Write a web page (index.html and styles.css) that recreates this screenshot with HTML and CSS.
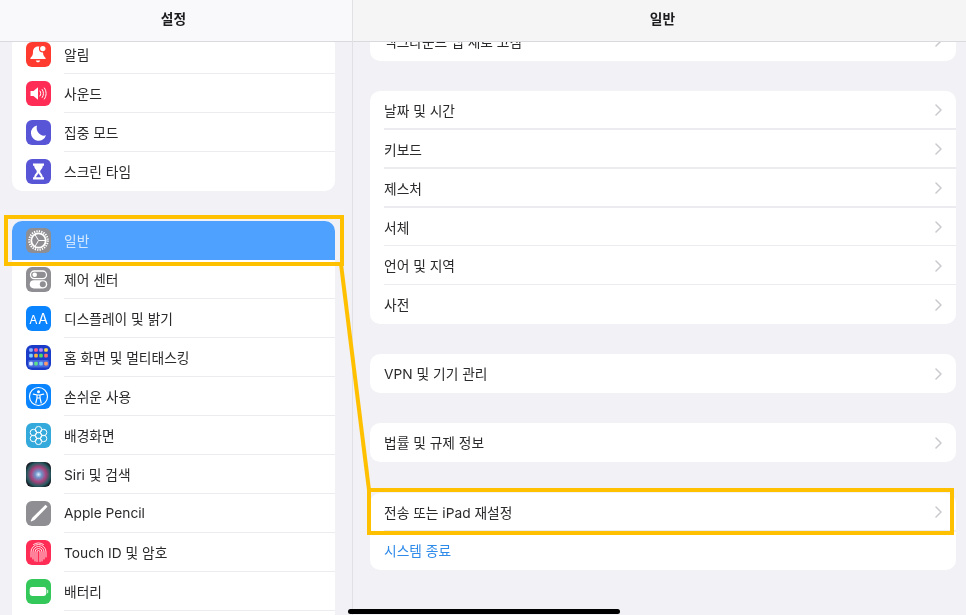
FILE: index.html
```html
<!DOCTYPE html>
<html lang="ko">
<head>
<meta charset="utf-8">
<title>설정</title>
<link rel="stylesheet" href="styles.css">
</head>
<body>
<div class="app">
  <aside class="pane side">
    <header class="bar bar-side">설정</header>
    <div class="scroll">
      <div class="inner inner-side">
        <section class="card">
          <div class="row row-i"><svg class="ico" viewBox="0 0 25 25"><rect width="25" height="25" rx="6" fill="#ff3b30"/><path d="M12 4.600c-3.200 0-5 2.500-5 5.400 0 3-.9 4.400-2.600 6v1h15.200v-1c-1.700-1.600-2.600-3-2.600-6 0-2.900-1.800-5.400-5-5.400z" fill="#fff"/><path d="M9.800 18.500h4.400c-.3 1.200-1.100 1.800-2.200 1.800s-1.900-.6-2.200-1.800z" fill="#fff"/><circle cx="16.800" cy="6.600" r="3.300" fill="#fff" stroke="#ff3b30" stroke-width="1.200"/></svg><span>알림</span></div>
          <div class="row row-i"><svg class="ico" viewBox="0 0 25 25"><rect width="25" height="25" rx="6" fill="#ff2d55"/><path d="M4.500 10h3l4.500-3.800v12.600L7.500 15h-3z" fill="#fff"/><path d="M14 10c1 1.500 1 3.500 0 5M16.200 8.500c1.700 2.500 1.700 5.500 0 8M18.400 7c2.300 3.300 2.300 7.700 0 11" fill="none" stroke="#fff" stroke-width="1" stroke-linecap="round"/></svg><span>사운드</span></div>
          <div class="row row-i"><svg class="ico" viewBox="0 0 25 25"><rect width="25" height="25" rx="6" fill="#5856d6"/><path d="M11 5.500a7.700 7.700 0 1 0 9 9.800c-5.200 1.700-10.800-3.500-9-9.800z" fill="#fff"/></svg><span>집중 모드</span></div>
          <div class="row row-i"><svg class="ico" viewBox="0 0 25 25"><rect width="25" height="25" rx="6" fill="#5856d6"/><path d="M7 4.500h11v2.200h-1.200c0 3-2.600 4-2.600 5.800s2.600 2.800 2.600 5.800H18v2.200H7v-2.200h1.200c0-3 2.600-4 2.600-5.800S8.200 9.700 8.200 6.700H7z" fill="#fff"/><path d="M12.500 14.300l2.700 3.900H9.800z" fill="#5856d6"/></svg><span>스크린 타임</span></div>
        </section>
        <section class="card">
          <div class="row row-i row-on"><svg class="ico" viewBox="0 0 25 25"><rect width="25" height="25" rx="6" fill="#8e8e93"/><circle cx="12.500" cy="12.500" r="9.300" fill="none" stroke="#fff" stroke-width="2" stroke-dasharray="1.300 1.135"/><circle cx="12.500" cy="12.500" r="7.200" fill="none" stroke="#fff" stroke-width="1.800"/><path d="M12.500 12.500L9 6.500M12.500 12.500L9 18.500M12.500 12.500h7" stroke="#fff" stroke-width="1"/></svg><span>일반</span></div>
          <div class="row row-i"><svg class="ico" viewBox="0 0 25 25"><rect width="25" height="25" rx="6" fill="#8e8e93"/><rect x="4.500" y="4" width="16" height="7.600" rx="3.800" fill="none" stroke="#fff" stroke-width="1.300"/><circle cx="8.700" cy="7.800" r="2.300" fill="#fff"/><rect x="3.800" y="13.200" width="17.400" height="8.200" rx="4.100" fill="#fff"/><circle cx="16.800" cy="17.300" r="3" fill="#8e8e93"/></svg><span>제어 센터</span></div>
          <div class="row row-i"><svg class="ico" viewBox="0 0 25 25"><rect width="25" height="25" rx="6" fill="#0a84ff"/><text x="7.500" y="17.500" class="ico-a1">A</text><text x="17" y="17.500" class="ico-a2">A</text></svg><span>디스플레이 및 밝기</span></div>
          <div class="row row-i"><svg class="ico" viewBox="0 0 25 25"><rect width="25" height="25" rx="6" fill="#1a3cc8"/><rect x="3.200" y="3.200" width="3.600" height="3.600" rx="1" fill="#8fb4ff"/><rect x="8.200" y="3.200" width="3.600" height="3.600" rx="1" fill="#ff5c8a"/><rect x="13.200" y="3.200" width="3.600" height="3.600" rx="1" fill="#b388ff"/><rect x="18.200" y="3.200" width="3.600" height="3.600" rx="1" fill="#ffd84d"/><rect x="3.200" y="8.800" width="3.600" height="3.600" rx="1" fill="#7fd0ff"/><rect x="8.200" y="8.800" width="3.600" height="3.600" rx="1" fill="#ffb03a"/><rect x="13.200" y="8.800" width="3.600" height="3.600" rx="1" fill="#4cd964"/><rect x="18.200" y="8.800" width="3.600" height="3.600" rx="1" fill="#ff6b6b"/><rect x="2" y="15" width="21" height="7.500" rx="2" fill="#4467dd"/><rect x="3.200" y="16.800" width="3.600" height="3.600" rx="1" fill="#d6e8ff"/><rect x="8.200" y="16.800" width="3.600" height="3.600" rx="1" fill="#5ee08a"/><rect x="13.200" y="16.800" width="3.600" height="3.600" rx="1" fill="#6fc8ff"/><rect x="18.200" y="16.800" width="3.600" height="3.600" rx="1" fill="#ff9a6b"/></svg><span>홈 화면 및 멀티태스킹</span></div>
          <div class="row row-i"><svg class="ico" viewBox="0 0 25 25"><rect width="25" height="25" rx="6" fill="#0a84ff"/><circle cx="12.500" cy="12.500" r="9" fill="none" stroke="#fff" stroke-width="1.200"/><circle cx="12.500" cy="7.700" r="1.500" fill="#fff"/><path d="M7.300 10.200l3.700.8v3l-1.200 5M17.700 10.200l-3.700.8v3l1.200 5M11 11h3v3h-3z" fill="none" stroke="#fff" stroke-width="1.200" stroke-linecap="round"/></svg><span>손쉬운 사용</span></div>
          <div class="row row-i"><svg class="ico" viewBox="0 0 25 25"><rect width="25" height="25" rx="6" fill="#34aadc"/><g fill="none" stroke="#fff" stroke-width="1"><circle cx="12.500" cy="12.500" r="3.200"/><circle cx="12.500" cy="6.600" r="3.200"/><circle cx="12.500" cy="18.400" r="3.200"/><circle cx="7.400" cy="9.500" r="3.200"/><circle cx="17.600" cy="9.500" r="3.200"/><circle cx="7.400" cy="15.500" r="3.200"/><circle cx="17.600" cy="15.500" r="3.200"/></g></svg><span>배경화면</span></div>
          <div class="row row-i"><svg class="ico" viewBox="0 0 25 25"><defs><radialGradient id="siri" cx=".5" cy=".5" r=".6"><stop offset="0" stop-color="#dcecff"/><stop offset=".22" stop-color="#6f93c9"/><stop offset=".5" stop-color="#a8427c"/><stop offset=".78" stop-color="#27595f"/><stop offset="1" stop-color="#120c18"/></radialGradient></defs><rect width="25" height="25" rx="6" fill="url(#siri)"/></svg><span>Siri 및 검색</span></div>
          <div class="row row-i"><svg class="ico" viewBox="0 0 25 25"><rect width="25" height="25" rx="6" fill="#8e8e93"/><path d="M19.500 3.800l2 2L8.500 19l-3.300 1.600-.6-.6L6.300 16.800z" fill="#fff"/></svg><span>Apple Pencil</span></div>
          <div class="row row-i"><svg class="ico" viewBox="0 0 25 25"><rect width="25" height="25" rx="6" fill="#ff2d55"/><g fill="none" stroke="#fff" stroke-width=".9" stroke-linecap="round" opacity=".9"><path d="M5 17v-5a7.500 7.500 0 0 1 15 0v5"/><path d="M7 19v-7a5.500 5.500 0 0 1 11 0v7"/><path d="M9 21v-9a3.500 3.500 0 0 1 7 0v9"/><path d="M11 21.500V12a1.500 1.500 0 0 1 3 0v9.500"/><path d="M7.500 4.500a9 9 0 0 1 10 0"/></g></svg><span>Touch ID 및 암호</span></div>
          <div class="row row-i"><svg class="ico" viewBox="0 0 25 25"><rect width="25" height="25" rx="6" fill="#34c759"/><rect x="3.700" y="8" width="16.600" height="9" rx="2.400" fill="#fff"/><rect x="21" y="10.800" width="1.200" height="3.400" rx=".6" fill="#fff" opacity=".7"/></svg><span>배터리</span></div>
          <div class="row row-i"><span></span></div>
        </section>
      </div>
    </div>
  </aside>
  <main class="pane detail">
    <header class="bar bar-detail">일반</header>
    <div class="scroll">
      <div class="inner inner-detail">
        <section class="card">
          <div class="row row-t"><span>백그라운드 앱 새로 고침</span><svg class="chev" viewBox="0 0 7 12"><path d="M1 1l5 5-5 5"/></svg></div>
        </section>
        <section class="card">
          <div class="row row-t"><span>날짜 및 시간</span><svg class="chev" viewBox="0 0 7 12"><path d="M1 1l5 5-5 5"/></svg></div>
          <div class="row row-t"><span>키보드</span><svg class="chev" viewBox="0 0 7 12"><path d="M1 1l5 5-5 5"/></svg></div>
          <div class="row row-t"><span>제스처</span><svg class="chev" viewBox="0 0 7 12"><path d="M1 1l5 5-5 5"/></svg></div>
          <div class="row row-t"><span>서체</span><svg class="chev" viewBox="0 0 7 12"><path d="M1 1l5 5-5 5"/></svg></div>
          <div class="row row-t"><span>언어 및 지역</span><svg class="chev" viewBox="0 0 7 12"><path d="M1 1l5 5-5 5"/></svg></div>
          <div class="row row-t"><span>사전</span><svg class="chev" viewBox="0 0 7 12"><path d="M1 1l5 5-5 5"/></svg></div>
        </section>
        <section class="card">
          <div class="row row-t"><span>VPN 및 기기 관리</span><svg class="chev" viewBox="0 0 7 12"><path d="M1 1l5 5-5 5"/></svg></div>
        </section>
        <section class="card">
          <div class="row row-t"><span>법률 및 규제 정보</span><svg class="chev" viewBox="0 0 7 12"><path d="M1 1l5 5-5 5"/></svg></div>
        </section>
        <section class="card card-last">
          <div class="row row-t"><span>전송 또는 iPad 재설정</span><svg class="chev" viewBox="0 0 7 12"><path d="M1 1l5 5-5 5"/></svg></div>
          <div class="row row-t row-link"><span>시스템 종료</span></div>
        </section>
      </div>
    </div>
  </main>
  <div class="mark mark-a"></div>
  <div class="mark mark-b"></div>
  <svg class="mark-line" viewBox="0 0 966 615"><path d="M341 264L369 490"/></svg>
  <div class="home"></div>
</div>
</body>
</html>
```
FILE: styles.css
```css
* { box-sizing: border-box; }
html, body { margin: 0; height: 100%; background: #f1f1f6; }
body { overflow: hidden; }
.app {
  position: relative;
  display: flex;
  width: 966px;
  height: 615px;
  overflow: hidden;
  background: #f1f1f6;
  color: #2a2a2c;
  font-family: "Inter", "Noto Sans CJK KR", sans-serif;
  font-size: 13.75px;
  filter: blur(.55px);
}
.pane { display: flex; flex-direction: column; height: 100%; min-width: 0; }
.side { flex: 0 0 353px; border-right: 1px solid #e0e0e5; }
.detail { flex: 1; }
.bar {
  flex: 0 0 42px;
  display: flex;
  align-items: center;
  justify-content: center;
  padding-bottom: 5px;
  border-bottom: 1px solid #d9d9de;
  font-weight: 600;
  color: #1c1c1e;
}
.bar-side { background: #f9f9fb; padding-right: 5px; }
.bar-detail { background: #f5f5f6; padding-left: 6px; }
.scroll { flex: 1; overflow: hidden; }
.inner { display: flex; flex-direction: column; gap: 30px; }
.inner-side { margin: -7px 17px 0 12px; }
.inner-detail { margin: -20px 10px 0 17px; }
.card { background: #fff; border-radius: 10px; overflow: hidden; }
.card-last { margin-top: .6px; }
.row { display: flex; align-items: center; position: relative; }
.row-i span { margin-bottom: 2px; }
.row-t span { margin-bottom: 1px; }
.row-i { height: 39px; padding-left: 14px; gap: 13px; }
.row-t { height: 38.9px; padding: 0 14px; justify-content: space-between; }
.row::after {
  content: "";
  position: absolute;
  right: 0;
  bottom: 0;
  height: 1.500px;
  background: #ececf0;
}
.row-i::after { left: 52px; }
.row-t::after { left: 14px; }
.row:last-child::after { display: none; }
.row-on { background: #4ea1ff; color: #d5e8ff; }
.row-on::after { display: none; }
.row-link { color: #2f8bea; }
.ico { flex: 0 0 25px; width: 25px; height: 25px; display: block; }
.ico-a1 { fill: #fff; font-size: 12px; text-anchor: middle; font-family: "Inter", sans-serif; }
.ico-a2 { fill: #fff; font-size: 14px; text-anchor: middle; font-family: "Inter", sans-serif; }
.chev { width: 7px; height: 12px; flex: none; }
.chev path { fill: none; stroke: #cacace; stroke-width: 1.500; stroke-linecap: round; stroke-linejoin: round; }
.mark { position: absolute; border: 4px solid #ffc000; }
.mark-a { left: 4px; top: 215px; width: 340px; height: 51px; }
.mark-b { left: 367px; top: 488px; width: 587px; height: 47px; }
.mark-line { position: absolute; inset: 0; width: 966px; height: 615px; pointer-events: none; }
.mark-line path { fill: none; stroke: #ffc000; stroke-width: 4; }
.home {
  position: absolute;
  left: 348px;
  top: 609px;
  width: 272px;
  height: 5px;
  border-radius: 3px;
  background: #000;
}
```
